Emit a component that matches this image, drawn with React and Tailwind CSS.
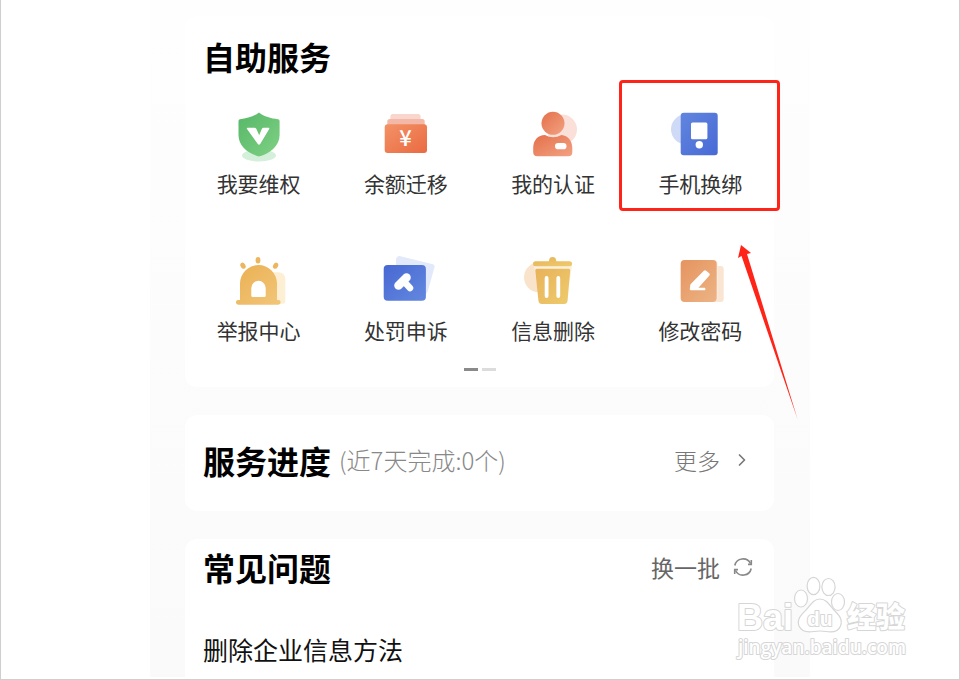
// src/App.jsx
import { ChevronRight } from 'lucide-react';

function Gradient({ id, from, to }) {
  return (
    <defs>
      <linearGradient id={id} x1="0" y1="0" x2="1" y2="1">
        <stop offset="0" stopColor={from} />
        <stop offset="1" stopColor={to} />
      </linearGradient>
    </defs>
  );
}

function Icon({ children }) {
  return (
    <svg viewBox="0 0 60 56" className="h-14 w-[60px] overflow-visible" aria-hidden="true">
      {children}
    </svg>
  );
}

const ShieldIcon = () => (
  <Icon>
    <Gradient id="shield" from="#57b768" to="#7fd184" />
    <ellipse cx="30" cy="47.5" rx="17" ry="6" fill="#d5f0da" />
    <path d="M30 4.5C35 8.5 42 10.5 49 11.2Q50.6 11.4 50.6 13V27C50.6 38 41 45.5 30 48.5C19 45.5 9.5 38 9.5 27V13Q9.5 11.4 11 11.2C18 10.5 25 8.5 30 4.5Z" fill="url(#shield)" />
    <path d="M18.6 19.8H25.5Q26.8 19.8 27.4 21L30.2 27.2L32.8 21Q33.4 19.8 34.6 19.8H39.6Q40.8 19.8 40.2 21L31.2 36Q30 37.4 28.8 36L18 21Q17.4 19.8 18.6 19.8Z" fill="#fff" />
  </Icon>
);

const WalletIcon = () => (
  <Icon>
    <Gradient id="wallet" from="#f39266" to="#ea6a42" />
    <rect x="14.4" y="6" width="30.2" height="14" rx="2.5" fill="#f9d5cc" />
    <rect x="11.3" y="11" width="37.4" height="14" rx="2.5" fill="#f4b8a8" />
    <rect x="8.7" y="16.3" width="42.3" height="28.7" rx="3" fill="url(#wallet)" />
    <text x="29.5" y="38" textAnchor="middle" fontSize="22" fontWeight="500" fill="#fff">¥</text>
  </Icon>
);

const PersonIcon = () => (
  <Icon>
    <Gradient id="person" from="#e4704a" to="#f2a283" />
    <circle cx="39" cy="21.5" r="15" fill="#fae0d8" />
    <path d="M22 27Q30 31.5 38.5 27C45 27.5 49.3 33 49.3 40V44.3Q49.3 48.3 45.3 48.3H14.5Q10.2 48.3 10.2 44V40C10.2 32 15 27.2 22 27Z" fill="url(#person)" />
    <circle cx="30" cy="15.3" r="11.5" fill="url(#person)" />
    <rect x="32" y="35" width="11.5" height="6.3" rx="3.1" fill="#fff" />
  </Icon>
);

const PhoneIcon = () => (
  <Icon>
    <Gradient id="phone" from="#6186de" to="#4869d6" />
    <circle cx="16" cy="21.3" r="15" fill="#cfdaf6" />
    <rect x="10.7" y="4.7" width="37" height="42.5" rx="3" fill="url(#phone)" />
    <rect x="21" y="14.5" width="16.4" height="16.8" rx="1.5" fill="#fff" />
    <circle cx="29.3" cy="36.7" r="3.7" fill="#fff" />
  </Icon>
);

const AlarmIcon = () => (
  <Icon>
    <Gradient id="alarm" from="#eab052" to="#f2c67a" />
    <path d="M44 17.3H50Q56.3 18 56.3 25V46Q56.3 48.7 53.5 48.7H44Z" fill="#fcefd3" />
    <path d="M11 45V28.5A18.5 18.5 0 0 1 48 28.5V45H49.3A2.3 2.3 0 0 1 49.3 49.7H9.3A2.3 2.3 0 0 1 9.3 45Z" fill="url(#alarm)" />
    <path d="M22.3 40.5V33A7.2 7.2 0 0 1 36.7 33V40.5Q36.7 42 35.2 42H23.8Q22.3 42 22.3 40.5Z" fill="#fff" />
    <g fill="#ecb65f">
      <ellipse cx="29" cy="5.3" rx="2.4" ry="3.2" />
      <ellipse cx="14" cy="10.7" rx="2.4" ry="3.2" transform="rotate(-32 14 10.7)" />
      <ellipse cx="46.6" cy="10.7" rx="2.4" ry="3.2" transform="rotate(32 46.6 10.7)" />
    </g>
  </Icon>
);

const GavelIcon = () => (
  <Icon>
    <Gradient id="gavel" from="#4768d3" to="#6388df" />
    <path d="M24.5 1.2L57 9.3Q59 10 58.6 12L51.5 37Q50 40 47 39L20 32V4Q21 0.5 24.5 1.2Z" fill="#e2e9fa" />
    <rect x="7.7" y="10" width="42.2" height="35.8" rx="4" fill="url(#gavel)" />
    <g stroke="#fff" strokeLinecap="round" fill="none">
      <path d="M22.5 30.5L30.5 22.5" strokeWidth="8.5" />
      <path d="M27.5 26L34 33" strokeWidth="6.5" />
    </g>
  </Icon>
);

const TrashIcon = () => (
  <Icon>
    <Gradient id="trash" from="#e8b25a" to="#eecb6c" />
    <circle cx="16" cy="22.3" r="15" fill="#f9e4cb" />
    <path d="M11 11H49L46 30H14Z" fill="#fbf0dc" />
    <path d="M12.5 6.3H26Q26 2 29.6 2T33.3 6.3H46.7A2.5 2.5 0 0 1 46.7 11.3H12.5A2.5 2.5 0 0 1 12.5 6.3Z" fill="url(#trash)" />
    <path d="M13.8 13.7H45.7Q47.4 13.7 47.2 15.5L44.6 45.5Q44.2 49 41 49H19Q15.8 49 15.4 45.5L12.3 15.5Q12.1 13.7 13.8 13.7Z" fill="url(#trash)" />
    <path d="M23.6 23V41M35.3 23V41" stroke="#fff" strokeWidth="3.8" strokeLinecap="round" />
  </Icon>
);

const EditIcon = () => (
  <Icon>
    <Gradient id="edit" from="#e5945f" to="#edb485" />
    <rect x="34" y="11" width="19.7" height="36" rx="3" fill="#fae5d3" />
    <rect x="10.7" y="5" width="37" height="42" rx="4" fill="#fbeee2" />
    <rect x="10.7" y="5" width="36" height="42" rx="4" fill="url(#edit)" />
    <path d="M33.8 15.8Q35 14.7 36.2 15.7L39.2 18.2Q40.4 19.3 39.4 20.4L28.5 32.7H34.5Q35.4 32.7 35.4 34T34.5 35.3H21Q19.7 35.3 19.8 34L20.2 30.5Q20.3 29.5 21 28.8Z" fill="#fff" />
  </Icon>
);

const services = [
  { name: '我要维权', icon: ShieldIcon },
  { name: '余额迁移', icon: WalletIcon },
  { name: '我的认证', icon: PersonIcon },
  { name: '手机换绑', icon: PhoneIcon, marked: true },
  { name: '举报中心', icon: AlarmIcon },
  { name: '处罚申诉', icon: GavelIcon },
  { name: '信息删除', icon: TrashIcon },
  { name: '修改密码', icon: EditIcon },
];

// red frame and arrow lying over the marked service
function Marker() {
  return (
    <>
      <span className="pointer-events-none absolute -top-7 -right-1.5 -bottom-3 -left-2 rounded-sm border-3 border-[#ff2418]" />
      <svg viewBox="0 0 64 176" className="pointer-events-none absolute top-34 left-27 h-44 w-16" aria-hidden="true">
        <path d="M6 1L16 9L12 10L62.5 175L6.5 12L3 14Z" fill="#ff2418" />
      </svg>
    </>
  );
}

function SectionTitle({ children }) {
  return <h2 className="text-[32px] leading-10 font-bold text-black">{children}</h2>;
}

function Watermark() {
  return (
    <svg viewBox="0 0 190 110" className="pointer-events-none absolute right-10 bottom-0 h-[110px] w-[190px]" role="img" aria-label="Baidu经验">
      <g fill="#fff" stroke="#d6d6d6" strokeWidth="1.2">
        <ellipse cx="84.5" cy="17" rx="6.4" ry="8.7" />
        <ellipse cx="99.5" cy="18" rx="6.6" ry="8.5" />
        <ellipse cx="72" cy="29.5" rx="6.5" ry="8.5" />
        <ellipse cx="109" cy="33" rx="6.5" ry="8.5" />
        <path d="M91 30C97 30 100 35 104 40C110 46 114 50 111.5 57C109 63.5 103 63.5 97 62.5Q91 61.5 85 62.5C79 63.5 73 63.5 70 57C67.5 50 72 46 78 40C82 35 85 30 91 30Z" />
      </g>
      <g fill="#fff" stroke="#d6d6d6" strokeWidth="2" strokeLinejoin="round" className="[paint-order:stroke]">
        <text x="8" y="61" fontSize="36" fontWeight="700" className="font-['Liberation_Sans',sans-serif]">Bai</text>
        <text x="78" y="57" fontSize="21" fontWeight="700" className="font-['Liberation_Sans',sans-serif]">du</text>
        <text x="118" y="59" fontSize="29" fontWeight="900">经验</text>
        <text x="9" y="85" fontSize="19" fontWeight="600" className="font-['Open_Sans',sans-serif]">jingyan.baidu.com</text>
      </g>
    </svg>
  );
}

export default function App() {
  return (
    <div className="relative min-h-screen overflow-hidden border-x border-b border-[#cfcfcf] bg-white pb-0.5 font-['Noto_Sans_CJK_SC',sans-serif]">
      <main className="mx-auto flex max-w-[660px] flex-col gap-7 bg-linear-to-b from-[#fefefe] to-[#fafafa] pt-4 pr-9 pl-[35px]">
        <section className="rounded-xl bg-white pt-5 pb-4">
          <div className="px-[18px]">
            <SectionTitle>自助服务</SectionTitle>
          </div>
          <ul className="mt-8 grid grid-cols-4 gap-y-14">
            {services.map(({ name, icon: ServiceIcon, marked }) => (
              <li key={name} className="relative">
                <button type="button" className="flex w-full flex-col items-center gap-[3px]">
                  <ServiceIcon />
                  <span className="text-[21px] leading-8 text-[#333]">{name}</span>
                </button>
                {marked && <Marker />}
              </li>
            ))}
          </ul>
          <div className="mt-[22px] flex justify-center gap-1">
            <span className="h-[3px] w-3.5 bg-[#8a8a8a]" />
            <span className="h-[3px] w-3.5 bg-[#dcdcdc]" />
          </div>
        </section>

        <section className="flex h-24 items-center justify-between rounded-xl bg-white pr-[22px] pb-1.5 pl-[18px]">
          <div className="flex items-center gap-2">
            <SectionTitle>服务进度</SectionTitle>
            <span className="text-[24px] leading-8 font-light text-[#888]">(近7天完成:0个)</span>
          </div>
          <button type="button" className="flex items-center gap-3 text-[23px] leading-8 font-light text-[#777]">
            更多
            <ChevronRight size={20} strokeWidth={2} className="text-[#777]" />
          </button>
        </section>

        <section className="rounded-t-xl bg-white pt-2 pr-[22px] pb-3 pl-[18px]">
          <div className="flex items-center justify-between">
            <SectionTitle>常见问题</SectionTitle>
            <button type="button" className="flex items-center gap-3.5 text-[23px] leading-8 text-[#666]">
              换一批
              <svg viewBox="0 0 18 18" className="size-[18px] overflow-visible" fill="none" stroke="#888" strokeWidth="1.6" aria-hidden="true">
                <path d="M0.8 7.5A8.4 8.4 0 0 1 16.5 5.5M17.2 10.5A8.4 8.4 0 0 1 1.5 12.5" />
                <path d="M17.3 2V6.4H14M0.7 16V11.6H4" />
              </svg>
            </button>
          </div>
          <a href="#faq" className="mt-[46px] block text-[25px] leading-8 text-[#111]">删除企业信息方法</a>
        </section>
      </main>
      <Watermark />
    </div>
  );
}
